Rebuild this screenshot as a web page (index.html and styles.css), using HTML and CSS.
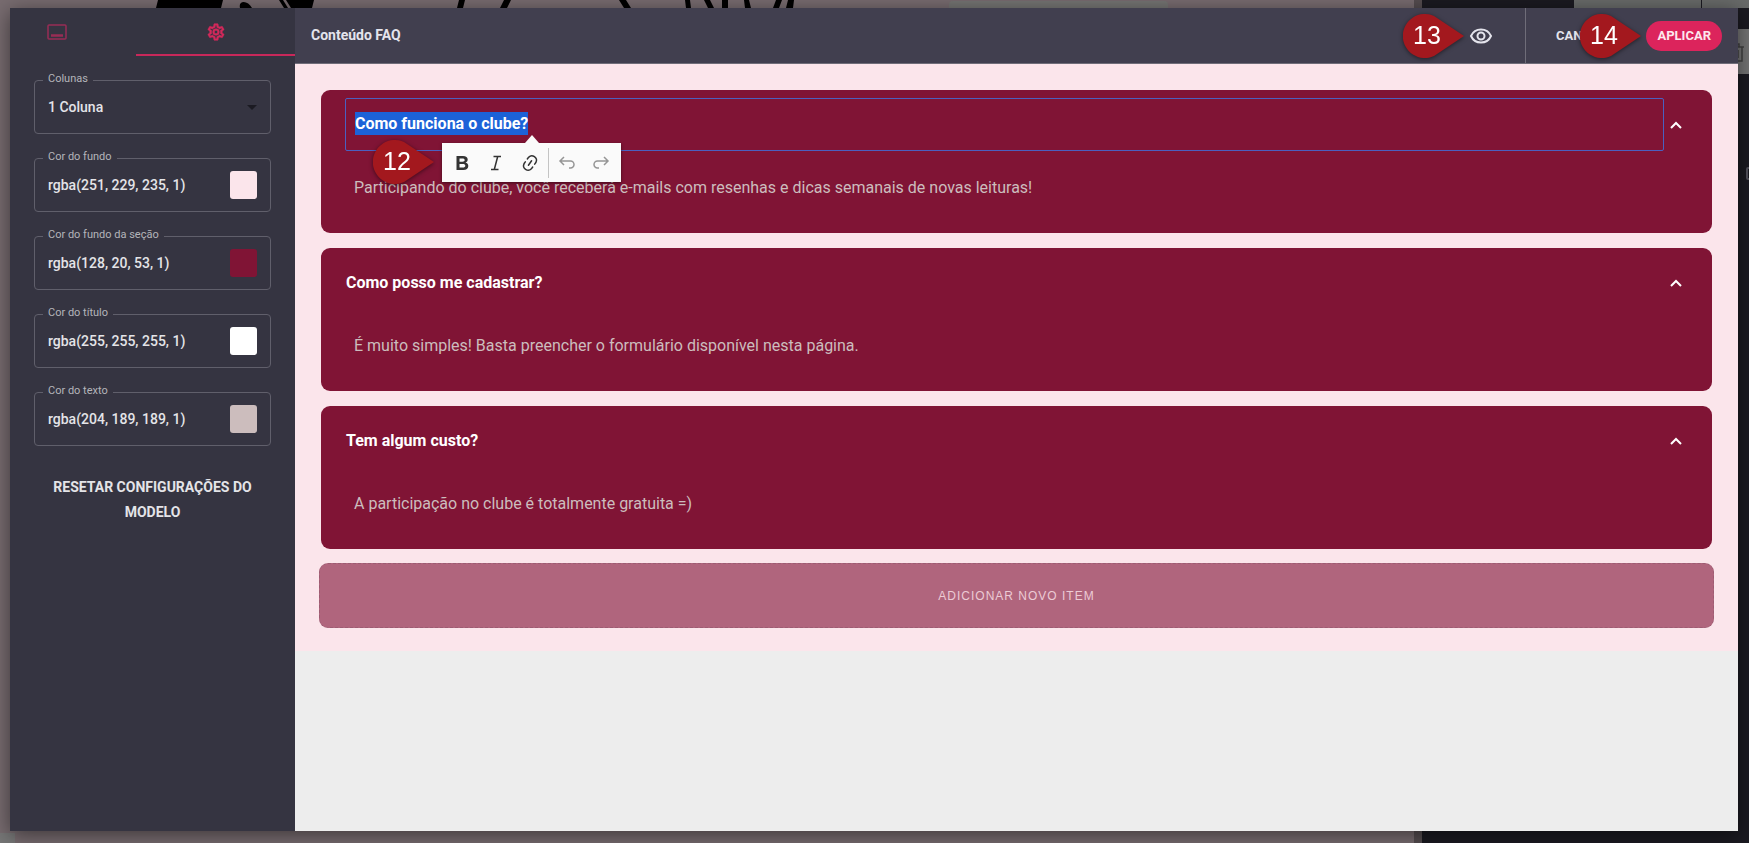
FILE: index.html
```html
<!DOCTYPE html>
<html lang="pt-BR">
<head>
    <meta charset="UTF-8">
    <meta name="viewport" content="width=device-width, initial-scale=1.0">
    <title>Conteúdo FAQ</title>
    <link rel="stylesheet" href="styles.css">
</head>
<body>
    <!-- page behind the dialog -->
    <div class="backdrop" aria-hidden="true">
        <div class="backdrop-canvas">
            <svg class="lettering" width="820" height="8" viewBox="0 0 820 8">
                <path d="M158 0h65l-2 8h-65zM240 8c-2-8 8-8 12 0zM279 0h4l5 8h-4zM286 0h28l-2 8h-21zM459 0h6l-2 8h-6zM504 0h7l-4 8h-7zM619 0h7l5 8h-7zM685 0h5l1 8h-5zM704 0h6l4 8h-6zM722 0h6v8h-6zM744 0h5l2 8h-6zM776 0h6l-3 8h-6zM788 0h6l-1 8h-7z"/>
            </svg>
            <span class="backdrop-card"></span>
            <span class="backdrop-cursor"></span>
        </div>
        <div class="backdrop-panel">
            <span class="backdrop-tabs"></span>
            <span class="backdrop-tool">
                <svg width="18" height="20" viewBox="0 0 18 20" fill="none" stroke="#414141" stroke-width="1.5"><path d="M1 4h16M6 4V1h6v3M3 4v14h12V4M7 7v8M11 7v8"/></svg>
            </span>
            <span class="backdrop-box"></span>
        </div>
    </div>

    <div class="modal">
        <aside class="sidebar">
            <div class="tabs">
                <button class="tab" type="button" aria-label="Conteúdo">
                    <svg width="20" height="16" viewBox="0 0 20 16" fill="none" stroke="currentColor" stroke-width="1.5"><rect x="1" y="1" width="18" height="14" rx="1"/><path d="M4 11.5h12" stroke-width="2.5"/></svg>
                </button>
                <button class="tab active" type="button" aria-label="Configurações">
                    <svg width="20" height="20" viewBox="0 0 24 24" fill="currentColor" stroke="currentColor" stroke-width="0.6"><path d="M12 8a4 4 0 0 1 4 4 4 4 0 0 1-4 4 4 4 0 0 1-4-4 4 4 0 0 1 4-4m0 2a2 2 0 0 0-2 2 2 2 0 0 0 2 2 2 2 0 0 0 2-2 2 2 0 0 0-2-2m-2 12c-.25 0-.46-.18-.5-.42l-.37-2.65c-.63-.25-1.17-.59-1.69-.99l-2.49 1.01c-.22.08-.49 0-.61-.22l-2-3.46c-.13-.22-.07-.49.12-.64l2.11-1.66L4.5 12l.07-1-2.11-1.63c-.19-.15-.25-.42-.12-.64l2-3.46c.12-.22.39-.31.61-.22l2.49 1c.52-.39 1.06-.73 1.69-.98l.37-2.65c.04-.24.25-.42.5-.42h4c.25 0 .46.18.5.42l.37 2.65c.63.25 1.17.59 1.69.98l2.49-1c.22-.09.49 0 .61.22l2 3.46c.13.22.07.49-.12.64L19.43 11l.07 1-.07 1 2.11 1.63c.19.15.25.42.12.64l-2 3.46c-.12.22-.39.31-.61.22l-2.49-1c-.52.39-1.06.73-1.69.98l-.37 2.65c-.04.24-.25.42-.5.42zm1.25-18-.37 2.61c-1.2.25-2.26.89-3.03 1.78L5.44 7.35l-.75 1.3L6.8 10.2a5.55 5.55 0 0 0 0 3.6l-2.12 1.56.75 1.3 2.43-1.04c.77.88 1.82 1.52 3.01 1.76l.37 2.62h1.52l.37-2.61c1.19-.25 2.24-.89 3.01-1.77l2.43 1.04.75-1.3-2.12-1.55c.4-1.17.4-2.44 0-3.61l2.11-1.55-.75-1.3-2.41 1.04a5.42 5.42 0 0 0-3.03-1.77L12.75 4z"/></svg>
                </button>
            </div>
            <form class="settings">
                <div class="field">
                    <label for="columns">Colunas</label>
                    <select id="columns">
                        <option>1 Coluna</option>
                        <option>2 Colunas</option>
                    </select>
                    <svg class="caret" width="10" height="5" viewBox="0 0 10 5"><path d="M0 0h10L5 5z"/></svg>
                </div>
                <div class="field">
                    <label for="bgColor">Cor do fundo</label>
                    <input type="text" id="bgColor" value="rgba(251, 229, 235, 1)">
                    <button class="swatch swatch-bg" type="button" aria-label="Escolher cor do fundo"></button>
                </div>
                <div class="field">
                    <label for="sectionColor">Cor do fundo da seção</label>
                    <input type="text" id="sectionColor" value="rgba(128, 20, 53, 1)">
                    <button class="swatch swatch-section" type="button" aria-label="Escolher cor da seção"></button>
                </div>
                <div class="field">
                    <label for="titleColor">Cor do título</label>
                    <input type="text" id="titleColor" value="rgba(255, 255, 255, 1)">
                    <button class="swatch swatch-title" type="button" aria-label="Escolher cor do título"></button>
                </div>
                <div class="field">
                    <label for="textColor">Cor do texto</label>
                    <input type="text" id="textColor" value="rgba(204, 189, 189, 1)">
                    <button class="swatch swatch-text" type="button" aria-label="Escolher cor do texto"></button>
                </div>
                <button class="reset" type="reset">Resetar configurações do modelo</button>
            </form>
        </aside>

        <main class="content">
            <header class="topbar">
                <h1>Conteúdo FAQ</h1>
                <div class="preview">
                    <button class="eye" type="button" aria-label="Visualizar">
                        <svg width="24" height="24" viewBox="0 0 24 24" fill="none" stroke="currentColor" stroke-width="2"><path d="M2 12C3.800 8 7.600 5.500 12 5.500S20.200 8 22 12c-1.800 4-5.600 6.500-10 6.500S3.800 16 2 12z"/><circle cx="12" cy="12" r="3.500"/></svg>
                    </button>
                    <span class="pin pin-preview">
                        <svg width="62" height="44" viewBox="0 0 62 44"><path d="M61 22 31 42A22 22 0 1 1 31 2z"/></svg>
                        <b>13</b>
                    </span>
                </div>
                <div class="actions">
                    <button class="cancel" type="button">Cancelar</button>
                    <button class="apply" type="button">Aplicar</button>
                    <span class="pin pin-apply">
                        <svg width="62" height="44" viewBox="0 0 62 44"><path d="M61 22 31 42A22 22 0 1 1 31 2z"/></svg>
                        <b>14</b>
                    </span>
                </div>
            </header>

            <section class="faq">
                <article class="item">
                    <div class="item-head">
                        <h2 class="item-title editing" contenteditable="true" spellcheck="false"><mark>Como funciona o clube?</mark></h2>
                        <button class="toggle" type="button" aria-label="Recolher">
                            <svg width="12" height="8" viewBox="0 0 12 8"><path d="M1 7l5-5 5 5"/></svg>
                        </button>
                    </div>
                    <p>Participando do clube, você receberá e-mails com resenhas e dicas semanais de novas leituras!</p>
                    <div class="toolbar" role="toolbar">
                        <button type="button" aria-label="Negrito">
                            <svg width="20" height="20" viewBox="0 0 20 20" fill="#333"><path fill-rule="evenodd" d="M4.5 3H11c3 0 4.700 1.300 4.700 3.600 0 1.500-.8 2.600-2.200 3 1.800.4 2.800 1.600 2.800 3.400 0 2.600-1.900 4-5 4H4.500zM7.500 5.400v3.300h2.900c1.500 0 2.300-.5 2.300-1.700 0-1.100-.8-1.600-2.300-1.600zm0 5.600v3.600h3.300c1.600 0 2.500-.6 2.500-1.800s-.9-1.800-2.500-1.800z"/></svg>
                        </button>
                        <button type="button" aria-label="Itálico">
                            <svg width="20" height="20" viewBox="0 0 20 20" fill="none" stroke="#333" stroke-width="1.5"><path d="M7.500 3.500H15M5 16.500h7.500M11.700 3.500l-3.400 13"/></svg>
                        </button>
                        <button type="button" aria-label="Link">
                            <svg width="20" height="20" viewBox="0 0 20 20" fill="#333"><path d="m11.077 15 .991-1.416a.75.75 0 1 1 1.229.86l-1.148 1.64a.748.748 0 0 1-.217.206 5.251 5.251 0 0 1-8.503-5.955.741.741 0 0 1 .12-.274l1.147-1.639a.75.75 0 1 1 1.228.86L4.933 10.7l.006.003a3.75 3.75 0 0 0 6.132 4.294l.006.004zm5.494-5.335a.748.748 0 0 1-.12.274l-1.147 1.639a.75.75 0 1 1-1.228-.86l.86-1.23a3.75 3.75 0 0 0-6.144-4.301l-.86 1.229a.75.75 0 0 1-1.229-.86l1.148-1.64a.748.748 0 0 1 .217-.206 5.251 5.251 0 0 1 8.503 5.955zm-4.563-2.532a.75.75 0 0 1 .184 1.045l-3.155 4.505a.75.75 0 1 1-1.229-.86l3.155-4.506a.75.75 0 0 1 1.045-.184z"/></svg>
                        </button>
                        <span class="separator"></span>
                        <button type="button" aria-label="Desfazer" disabled>
                            <svg width="20" height="20" viewBox="0 0 20 20" fill="none" stroke="#333" stroke-width="1.5"><path d="M7 4 3 8l4 4M3 8h10.500a3.500 3.500 0 0 1 0 7H12"/></svg>
                        </button>
                        <button type="button" aria-label="Refazer" disabled>
                            <svg width="20" height="20" viewBox="0 0 20 20" fill="none" stroke="#333" stroke-width="1.5"><path d="M13 4l4 4-4 4M17 8H6.500a3.500 3.500 0 0 0 0 7H8"/></svg>
                        </button>
                    </div>
                    <span class="pin pin-toolbar">
                        <svg width="62" height="44" viewBox="0 0 62 44"><path d="M61 22 31 42A22 22 0 1 1 31 2z"/></svg>
                        <b>12</b>
                    </span>
                </article>
                <article class="item">
                    <div class="item-head">
                        <h2 class="item-title">Como posso me cadastrar?</h2>
                        <button class="toggle" type="button" aria-label="Recolher">
                            <svg width="12" height="8" viewBox="0 0 12 8"><path d="M1 7l5-5 5 5"/></svg>
                        </button>
                    </div>
                    <p>É muito simples! Basta preencher o formulário disponível nesta página.</p>
                </article>
                <article class="item">
                    <div class="item-head">
                        <h2 class="item-title">Tem algum custo?</h2>
                        <button class="toggle" type="button" aria-label="Recolher">
                            <svg width="12" height="8" viewBox="0 0 12 8"><path d="M1 7l5-5 5 5"/></svg>
                        </button>
                    </div>
                    <p>A participação no clube é totalmente gratuita =)</p>
                </article>
                <button class="add" type="button">Adicionar novo item</button>
            </section>
        </main>
    </div>
</body>
</html>
```
FILE: styles.css
```css
* {
    box-sizing: border-box;
}
body {
    margin: 0;
    font-family: Roboto, "Liberation Sans", sans-serif;
    background-color: #1b1a21;
    overflow: hidden;
}
button, input, select {
    font-family: inherit;
    border: none;
    padding: 0;
    background: none;
    color: inherit;
}
button {
    cursor: pointer;
    text-transform: uppercase;
}
svg {
    display: block;
}

/* Backdrop */
.backdrop {
    position: absolute;
    inset: 0;
    display: flex;
}
.backdrop-canvas {
    flex: 1;
    position: relative;
    background-color: #786c70;
    border-right: 8px solid #554d50;
}
.backdrop-card {
    position: absolute;
    left: 949px;
    top: 1px;
    width: 219px;
    height: 20px;
    border-radius: 4px;
    background-color: #757573;
}
.backdrop-cursor {
    position: absolute;
    left: 0;
    bottom: 0;
    width: 15px;
    height: 10px;
    background-color: #777;
}
.backdrop-panel {
    width: 327px;
    position: relative;
    background-color: #1b1a21;
}
.backdrop-tabs {
    position: absolute;
    top: 0;
    right: 0;
    width: 175px;
    height: 8px;
    background: linear-gradient(90deg, #696b6a 127px, #1b1a21 127px, #1b1a21 128px, #696b6a 128px);
}
.backdrop-tool {
    position: absolute;
    top: 29px;
    right: 0;
    width: 16px;
    height: 45px;
    padding-top: 14px;
    background-color: #757575;
}
.backdrop-tool svg {
    margin-left: -6px;
}
.backdrop-box {
    position: absolute;
    top: 167px;
    right: -9px;
    width: 12px;
    height: 13px;
    border: 2px solid #53525c;
    border-radius: 2px;
}

/* Dialog */
.modal {
    position: relative;
    display: flex;
    height: calc(100vh - 20px);
    min-height: 660px;
    margin: 8px 11px 12px 10px;
    background-color: #ededed;
    box-shadow: 0 4px 20px rgba(0, 0, 0, 0.5);
}

/* Sidebar */
.sidebar {
    flex: 0 0 285px;
    overflow: hidden;
    background-color: #353441;
    color: #e4e4e8;
}
.tabs {
    display: flex;
    justify-content: flex-end;
    height: 48px;
}
.tab {
    flex: 0 0 159px;
    display: flex;
    align-items: center;
    justify-content: center;
    padding-top: 2px;
    border-bottom: 2px solid transparent;
    color: #982c55;
}
.tab.active {
    border-color: #c8285a;
    color: #d3295b;
}
.settings {
    display: flex;
    flex-direction: column;
    gap: 24px;
    padding: 24px;
}
.field {
    position: relative;
    display: flex;
    align-items: center;
    height: 54px;
    padding: 0 13px;
    border: 1px solid #605f6b;
    border-radius: 4px;
}
.field label {
    position: absolute;
    left: 8px;
    top: -10px;
    padding: 0 5px;
    background-color: #353441;
    color: #b4b4ba;
    font-size: 11px;
    line-height: 16px;
}
.field input, .field select {
    flex: 1;
    min-width: 0;
    height: 52px;
    appearance: none;
    outline: none;
    font-size: 14px;
    font-weight: 500;
}
.caret {
    fill: #1b1a22;
}
.swatch {
    width: 27px;
    height: 28px;
    border-radius: 3px;
}
.swatch-bg {
    background-color: #fbe5eb;
}
.swatch-section {
    background-color: #801435;
}
.swatch-title {
    background-color: #fff;
}
.swatch-text {
    background-color: #ccbdbd;
}
.reset {
    padding: 5px 12px;
    font-size: 14px;
    font-weight: 700;
    line-height: 25px;
}

/* Top bar */
.content {
    flex: 1;
    min-width: 0;
}
.topbar {
    display: flex;
    height: 56px;
    background-color: #413f4f;
    border-bottom: 1px solid #6f6d79;
    color: #e4e4ec;
}
.topbar h1 {
    flex: 1;
    margin: 0;
    padding-left: 16px;
    font-size: 14px;
    font-weight: 700;
    line-height: 55px;
}
.preview, .actions {
    position: relative;
    display: flex;
    align-items: center;
}
.preview {
    padding-right: 32px;
}
.actions {
    gap: 24px;
    padding: 0 16px 0 30px;
    border-left: 1px solid #6f6d79;
}
.cancel, .apply {
    font-size: 13px;
    font-weight: 700;
    line-height: 30px;
}
.apply {
    padding: 0 11px;
    border-radius: 15px;
    background-color: #dc245c;
    color: #fce8ee;
}

/* Numbered pins */
.pin {
    position: absolute;
    z-index: 2;
    filter: drop-shadow(0 1px 2px rgba(0, 0, 0, 0.5));
}
.pin svg {
    fill: #a3181e;
}
.pin b {
    position: absolute;
    top: 0;
    left: 10px;
    color: #fff;
    font-family: "Liberation Sans", Arial, sans-serif;
    font-size: 25px;
    font-weight: 400;
    line-height: 42px;
}
.pin-preview {
    right: 60px;
    top: 6px;
}
.pin-apply {
    right: 96px;
    top: 6px;
}
.pin-toolbar {
    left: 52px;
    top: 50px;
}

/* FAQ */
.faq {
    display: flex;
    flex-direction: column;
    gap: 15px;
    padding: 26px 26px 23px;
    background-color: #fbe5eb;
}
.item {
    position: relative;
    height: 143px;
    padding: 8px 24px;
    border-radius: 9px;
    background-color: #801435;
}
.item-head {
    display: flex;
    align-items: center;
    height: 53px;
}
.item-title {
    flex: 1;
    margin: 0;
    color: #fff;
    font-size: 16px;
    font-weight: 700;
    line-height: 51px;
    border: 1px solid transparent;
}
.item-title.editing {
    padding: 0 0 2px 9px;
    line-height: 49px;
    border-color: #4b60c0;
    border-radius: 2px;
    outline: none;
}
.item-title mark {
    padding: 2px 0;
    background-color: #1c62d8;
    color: #fff;
}
.toggle {
    width: 24px;
    height: 24px;
    display: flex;
    align-items: center;
    justify-content: center;
}
.toggle path {
    fill: none;
    stroke: #fff;
    stroke-width: 2;
}
.item p {
    margin: 25px 9px;
    color: #ccbdbd;
    font-size: 16px;
    line-height: 24px;
}
.toolbar {
    position: absolute;
    left: 121px;
    top: 53px;
    z-index: 1;
    display: flex;
    align-items: center;
    height: 39px;
    padding: 0 3px;
    background-color: #fafafa;
    box-shadow: 0 1px 3px rgba(0, 0, 0, 0.5);
}
.toolbar::before {
    content: "";
    position: absolute;
    left: 83px;
    top: -8px;
    border: 7px solid transparent;
    border-top: none;
    border-bottom: 8px solid #fafafa;
}
.toolbar button {
    width: 34px;
    height: 34px;
    display: flex;
    align-items: center;
    justify-content: center;
}
.toolbar button:disabled {
    opacity: 0.5;
}
.separator {
    width: 1px;
    height: 30px;
    margin: 0 1px;
    background-color: #c4c4c4;
}
.add {
    height: 65px;
    margin: -1px -2px 0;
    border: 1px dashed #9c5c72;
    border-radius: 9px;
    background-color: #b0657d;
    color: #eccbd5;
    font-family: "Liberation Sans", Arial, sans-serif;
    font-size: 12px;
    letter-spacing: 1px;
}
```
